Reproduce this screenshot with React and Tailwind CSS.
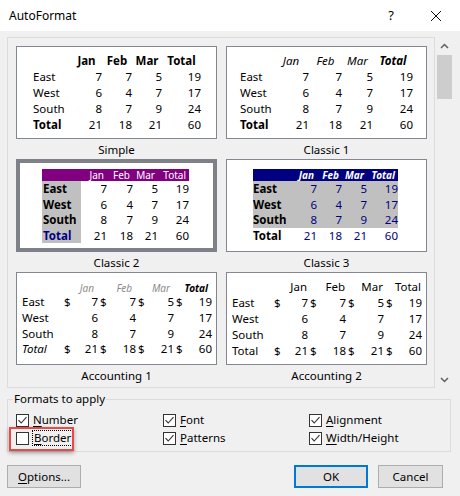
import React from "react";

const DATA = [
  ["East", 7, 7, 5, 19],
  ["West", 6, 4, 7, 17],
  ["South", 8, 7, 9, 24],
  ["Total", 21, 18, 21, 60],
];
const HEADS = ["Jan", "Feb", "Mar", "Total"];

const Simple = () => (
  <div className="pl-[16px] pt-[6px] grid grid-cols-[38px_31px_30px_30px_39px] leading-[16px]">
    <span />
    {HEADS.map((h) => (
      <span key={h} className="font-bold text-center">{h}</span>
    ))}
    {DATA.map(([l, ...n]) => (
      <React.Fragment key={l}>
        <span className={l === "Total" ? "font-bold" : ""}>{l}</span>
        {n.map((v, i) => (
          <span key={i} className="text-right">{v}</span>
        ))}
      </React.Fragment>
    ))}
  </div>
);

const Classic1 = () => (
  <div className="pl-[13px] pt-[6px] grid grid-cols-[33px_36px_33px_31px_40px] leading-[16px]">
    <span />
    {HEADS.map((h) => (
      <span key={h} className={`italic text-center ${h === "Total" ? "font-bold" : ""}`}>{h}</span>
    ))}
    {DATA.map(([l, ...n]) => (
      <React.Fragment key={l}>
        <span className={l === "Total" ? "font-bold" : ""}>{l}</span>
        {n.map((v, i) => (
          <span key={i} className="text-right">{v}</span>
        ))}
      </React.Fragment>
    ))}
  </div>
);

const Classic2 = () => (
  <div className="pl-[22px] pt-[6px] grid grid-cols-[39px_26px_26px_25px_31px] grid-rows-[12px_16px_15px_16px_15px] items-center">
    <span className="h-full bg-[#800080]" />
    {HEADS.map((h) => (
      <span key={h} className="h-full bg-[#800080] text-white text-[10px] leading-[12px] text-right pr-[3px]">{h}</span>
    ))}
    {DATA.map(([l, ...n]) => (
      <React.Fragment key={l}>
        <span className={`h-full flex items-center pl-[1px] bg-[#c0c0c0] font-bold ${l === "Total" ? "text-[#000080]" : ""}`}>{l}</span>
        {n.map((v, i) => (
          <span key={i} className="text-right">{v}</span>
        ))}
      </React.Fragment>
    ))}
  </div>
);

const Classic3 = () => (
  <div className="pl-[26px] pt-[9px] grid grid-cols-[38px_26px_25px_25px_31px] grid-rows-[12px_16px_15px_16px_15px]">
    <span className="bg-[#000080]" />
    {HEADS.map((h) => (
      <span key={h} className="bg-[#000080] text-white font-bold italic text-[10px] leading-[12px] text-right pr-[3px]">{h}</span>
    ))}
    {DATA.map(([l, ...n]) => (
      <React.Fragment key={l}>
        <span className={`flex items-center font-bold ${l !== "Total" ? "bg-[#c0c0c0]" : ""}`}>{l}</span>
        {n.map((v, i) => (
          <span key={i} className={`flex items-center justify-end text-[#000080] ${l !== "Total" ? "bg-[#c0c0c0]" : ""}`}>{v}</span>
        ))}
      </React.Fragment>
    ))}
  </div>
);

const Accounting = ({ fancy }) => (
  <div
    className={`pl-[5px] grid grid-cols-[40px_36px_38px_38px_38px] items-center ${
      fancy ? "pt-[9px] grid-rows-[12px_16px_16px_15px_15px]" : "pt-[6px] grid-rows-[16px_16px_16px_16px_15px]"
    }`}
  >
    <span />
    {HEADS.map((h) =>
      fancy ? (
        <span
          key={h}
          className={`italic text-[10px] leading-[12px] text-right pr-[4px] ${h === "Total" ? "font-bold text-black" : "text-[#8c8c8c]"}`}
        >
          {h}
        </span>
      ) : (
        <span key={h} className="text-right pr-[1px]">{h}</span>
      )
    )}
    {DATA.map(([l, ...n]) => (
      <React.Fragment key={l}>
        <span className={l === "Total" && fancy ? "italic" : ""}>{l}</span>
        {n.map((v, i) => (
          <span key={i} className="flex justify-between pl-[2px]">
            <span>{l === "East" || l === "Total" ? "$" : ""}</span>
            <span>{v}</span>
          </span>
        ))}
      </React.Fragment>
    ))}
  </div>
);

const Sample = ({ label, selected, children }) => (
  <div className="flex flex-col">
    <div className={`h-[93px] bg-white ${selected ? "border-4 border-[#7e8188]" : "border border-[#828790]"}`}>{children}</div>
    <div className="h-[20px] text-center leading-[22px]">{label}</div>
  </div>
);

const Chevron = ({ down }) => (
  <svg width="9" height="6" viewBox="0 0 9 6">
    <path d={down ? "M1 1 L4.5 4.5 L8 1" : "M1 5 L4.5 1.5 L8 5"} fill="none" stroke="#606060" strokeWidth="1.5" />
  </svg>
);

const Check = ({ checked }) => (
  <span className="w-[13px] h-[13px] border border-[#333] bg-white flex items-center justify-center shrink-0">
    {checked && (
      <svg width="11" height="11" viewBox="0 0 11 11">
        <path d="M1.5 5.2 L4.2 8 L9.5 2.2" fill="none" stroke="#333" strokeWidth="1.1" />
      </svg>
    )}
  </span>
);

const Opt = ({ k, rest, checked = true, focus }) => (
  <label className="flex items-center gap-[4px] h-[18px]">
    <Check checked={checked} />
    <span className={focus ? "outline outline-1 outline-dotted outline-black px-[1px] leading-[14px]" : ""}>
      <span className="underline underline-offset-2">{k}</span>
      {rest}
    </span>
  </label>
);

export default function App() {
  return (
    <div className="relative w-[460px] h-[496px] bg-[#f0f0f0] overflow-hidden text-[11.5px] text-black font-['Segoe_UI','Noto_Sans',sans-serif]">
      {/* title bar */}
      <div className="h-[31px] bg-white flex items-center">
        <span className="pl-[9px] text-[12px]">AutoFormat</span>
        <span className="ml-auto w-[10px] text-center text-[13px]">?</span>
        <svg className="ml-[35px] mr-[19px]" width="10" height="10" viewBox="0 0 10 10">
          <path d="M0 0 L10 10 M10 0 L0 10" stroke="#111" strokeWidth="1" />
        </svg>
      </div>

      {/* gallery */}
      <div className="flex mt-[6px] ml-[7px]">
        <div className="w-[428px] h-[351px] border border-[#dcdcdc] pt-[8px] pl-[8px]">
          <div className="grid grid-cols-[201px_201px] gap-x-[9px]">
            <Sample label="Simple"><Simple /></Sample>
            <Sample label="Classic 1"><Classic1 /></Sample>
            <Sample label="Classic 2" selected><Classic2 /></Sample>
            <Sample label="Classic 3"><Classic3 /></Sample>
            <Sample label="Accounting 1"><Accounting fancy /></Sample>
            <Sample label="Accounting 2"><Accounting /></Sample>
          </div>
        </div>
        <div className="ml-[1px] w-[17px] h-[351px] flex flex-col items-center">
          <div className="h-[17px] flex items-center justify-center"><Chevron /></div>
          <div className="mt-[1px] w-[15px] h-[44px] bg-[#cdcdcd]" />
          <div className="mt-auto h-[17px] flex items-center justify-center"><Chevron down /></div>
        </div>
      </div>

      {/* formats group */}
      <fieldset className="mt-[3px] ml-[7px] w-[444px] border border-[#dcdcdc] pb-[4px]">
        <legend className="ml-[5px] px-[1px] leading-[16px]">Formats to apply</legend>
        <div className="pt-[4px] pl-[8px] grid grid-cols-[147px_146px_auto]">
          <Opt k="N" rest="umber" />
          <Opt k="F" rest="ont" />
          <Opt k="A" rest="lignment" />
          <Opt k="B" rest="order" checked={false} focus />
          <Opt k="P" rest="atterns" />
          <Opt k="W" rest="idth/Height" />
        </div>
      </fieldset>

      {/* buttons */}
      <div className="flex mt-[13px] px-[7px] pr-[17px]">
        <button className="w-[74px] h-[23px] bg-[#e1e1e1] border border-[#adadad]">
          <span className="underline underline-offset-2">O</span>ptions...
        </button>
        <button className="ml-auto w-[74px] h-[23px] bg-[#e1e1e1] border-2 border-[#0078d7]">OK</button>
        <button className="ml-[10px] w-[65px] h-[23px] bg-[#e1e1e1] border border-[#adadad]">Cancel</button>
      </div>

      {/* highlight annotation */}
      <div className="absolute left-[9px] top-[427px] w-[65px] h-[24px] border-2 border-[#e84a4a] shadow-[0_2px_4px_rgba(0,0,0,0.35)]" />
    </div>
  );
}
